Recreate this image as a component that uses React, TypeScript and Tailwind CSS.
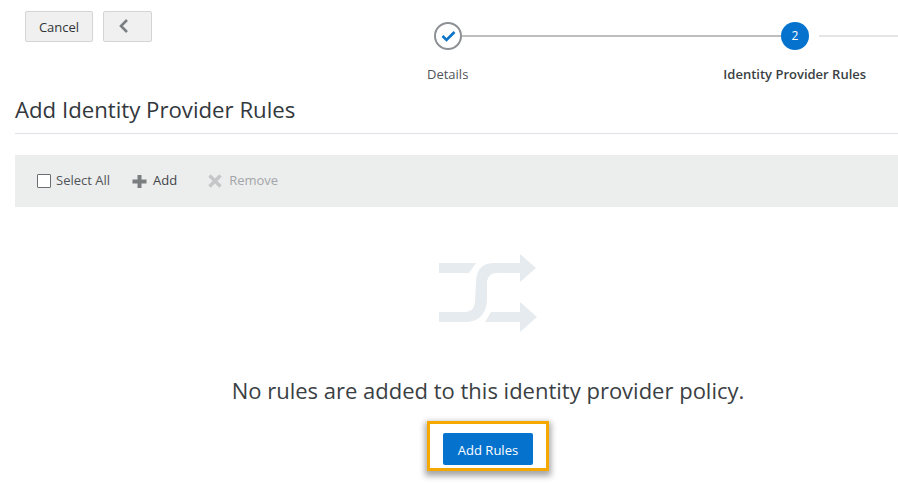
import React from 'react';

const font = "font-['Open_Sans','Noto_Sans',sans-serif]";

const EmptyIcon: React.FC = () => (
  <svg width="98" height="80" viewBox="0 0 98 80" fill="#e6ebef">
    <path d="M0 9H37L30 19H0Z" />
    <path d="M0 58H24C31 58 35 56 36 48L37 27C38 14 44 9 56 9H81V0L97 14L81 28V19H58C52 19 49 22 48 28V47C47 61 39 68 26 68H0Z" />
    <path d="M52 58H81V48L98 63L81 78V68H46Z" />
  </svg>
);

const App: React.FC = () => {
  return (
    <div className={`${font} w-[898px] h-[490px] overflow-hidden bg-white text-[#33383d]`}>
      <div className="flex items-start h-[97px]">
        <div className="flex gap-[10px] pl-[25px] pt-[11px] w-[403px]">
          <button className="w-[68px] h-[31px] pt-[2px] bg-[#f0f0f0] border border-[#d2d4d6] rounded-[2px] text-[13px] text-[#2f3438]">Cancel</button>
          <button className="w-[49px] h-[31px] bg-[#f0f0f0] border border-[#d2d4d6] rounded-[2px] flex items-center justify-center pr-[9px] pb-[1px]">
            <svg width="11" height="14" viewBox="0 0 11 14" fill="none" stroke="#7c7f82" strokeWidth="2.6">
              <path d="M9 1L3 7L9 13" />
            </svg>
          </button>
        </div>
        <div className="flex-1 pt-[22px] relative">
          <div className="flex items-center">
            <div className="w-[28px] h-[28px] ml-[31px] rounded-full border-2 border-[#8d9094] flex items-center justify-center shrink-0">
              <svg width="15" height="12" viewBox="0 0 15 12" fill="none" stroke="#0a74c9" strokeWidth="2.6">
                <path d="M1.5 6L5.5 10L13.5 2" />
              </svg>
            </div>
            <div className="w-[319px] h-[2px] bg-[#bcbec0]" />
            <div className="w-[28px] h-[28px] rounded-full bg-[#0572ce] text-white text-[12px] flex items-center justify-center shrink-0">2</div>
            <div className="ml-[10px] flex-1 h-[2px] bg-[#e4e5e6]" />
          </div>
          <div className="flex items-start mt-[15px] text-[13px] leading-[18px]">
            <div className="ml-[24px] text-[#50555a]">Details</div>
            <div className="ml-[255px] font-semibold text-[13px] text-[#3a3f44]">Identity Provider Rules</div>
          </div>
        </div>
      </div>
      <div className="ml-[15px] h-[37px] border-b border-[#dfe3e8] text-[22.2px] leading-[25px] text-[#33383d]">Add Identity Provider Rules</div>
      <div className="ml-[15px] mt-[21px] h-[52px] bg-[#eceded] flex items-center pl-[22px] text-[13px]">
        <div className="w-[14px] h-[14px] border-[1.5px] border-[#6a6e72] bg-white rounded-[1px] mr-[5px]" />
        <span className="text-[#50555a]">Select All</span>
        <svg className="ml-[22px] mr-[6px]" width="15" height="15" viewBox="0 0 15 15" fill="#7b7e81">
          <path d="M5.5 1H9.5V5.5H14.5V9.5H9.5V14H5.5V9.5H.5V5.5H5.5Z" />
        </svg>
        <span className="text-[#3f4448]">Add</span>
        <svg className="ml-[31px] mr-[7px]" width="14" height="14" viewBox="0 0 14 14" fill="none" stroke="#c4c6c8" strokeWidth="3.4">
          <path d="M1.5 1.5L12.5 12.5M12.5 1.5L1.5 12.5" />
        </svg>
        <span className="text-[#a3a6a9]">Remove</span>
      </div>
      <div className="flex flex-col items-center pl-[78px]">
        <div className="mt-[47px]">
          <EmptyIcon />
        </div>
        <div className="mt-[40px] text-[22px] leading-[32px] text-[#3a3f44]">No rules are added to this identity provider policy.</div>
        <div className="mt-[15px] w-[122px] h-[50px] border-[3px] border-[#f5a800] shadow-[0_3px_6px_2px_rgba(0,0,0,0.35)] bg-white flex justify-center pt-[9px]">
          <button className="w-[90px] h-[32px] pt-[3px] bg-[#0572ce] rounded-[2px] text-white text-[13px]">Add Rules</button>
        </div>
      </div>
    </div>
  );
};

export default App;
